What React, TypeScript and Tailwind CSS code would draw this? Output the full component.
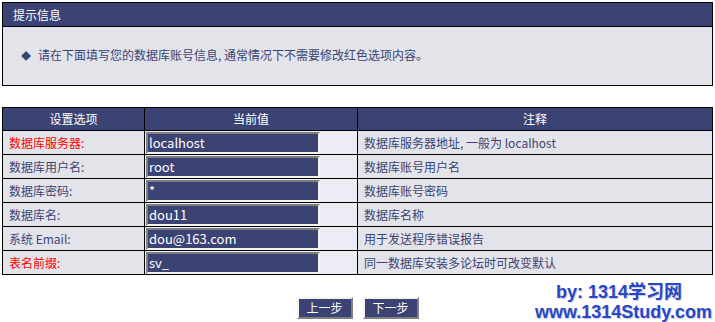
const navy = "bg-[#3b4374]";

const rows: { label: string; value: string; note: string; red?: boolean }[] = [
  { label: "数据库服务器:", value: "localhost", note: "数据库服务器地址, 一般为 localhost", red: true },
  { label: "数据库用户名:", value: "root", note: "数据库账号用户名" },
  { label: "数据库密码:", value: "*", note: "数据库账号密码" },
  { label: "数据库名:", value: "dou11", note: "数据库名称" },
  { label: "系统 Email:", value: "dou@163.com", note: "用于发送程序错误报告" },
  { label: "表名前缀:", value: "sv_", note: "同一数据库安装多论坛时可改变默认", red: true },
];

function Btn({ children }: { children: string }) {
  return (
    <button
      className={`w-[56px] h-[22px] ${navy} text-white text-[12px] leading-none border-2 border-t-[#f4f4ec] border-l-[#f4f4ec] border-b-[#808080] border-r-[#808080]`}
    >
      {children}
    </button>
  );
}

export default function App() {
  return (
    <div
      className="relative w-[715px] h-[322px] bg-white overflow-hidden text-[12px] text-[#3b4374]"
      style={{ fontFamily: '"Noto Sans CJK SC", "Liberation Sans", sans-serif' }}
    >
      <div className="mt-[2px] mx-[2px] border border-black">
        <div className={`h-[23px] ${navy} text-white flex items-center pl-[10px]`}>提示信息</div>
        <div className="h-[59px] border-t border-black bg-[#e3e4e9] flex items-center pl-[18px] pb-[2px]">
          <span className="text-[10px] mr-[7px]">◆</span>
          请在下面填写您的数据库账号信息, 通常情况下不需要修改红色选项内容。
        </div>
      </div>

      <table className="mt-[21px] mx-[2px] w-[711px] table-fixed border-collapse">
        <colgroup>
          <col className="w-[142px]" />
          <col className="w-[213px]" />
          <col />
        </colgroup>
        <thead>
          <tr className={`h-[23px] ${navy} text-white`}>
            <th className="border border-black font-normal">设置选项</th>
            <th className="border border-black font-normal">当前值</th>
            <th className="border border-black font-normal">注释</th>
          </tr>
        </thead>
        <tbody>
          {rows.map((r) => (
            <tr key={r.label} className="h-[24px]">
              <td className={`border border-black bg-[#e3e4e9] pl-[6px] ${r.red ? "text-[#ff0000]" : ""}`}>
                {r.label}
              </td>
              <td className="border border-black bg-[#ececf5] pl-[1px] py-0">
                <div
                  className={`w-[174px] h-[22px] ${navy} text-white text-[13px] flex items-center pl-[1px] border-2 border-t-[#808080] border-l-[#808080] border-b-[#f4f4ec] border-r-[#f4f4ec]`}
                >
                  {r.value}
                </div>
              </td>
              <td className="border border-black bg-[#e3e4e9] pl-[6px]">{r.note}</td>
            </tr>
          ))}
        </tbody>
      </table>

      <div className="flex justify-center gap-[10px] mt-[22px]">
        <Btn>上一步</Btn>
        <Btn>下一步</Btn>
      </div>

      <div
        className="absolute right-[3px] bottom-0 text-[#2747c9] font-bold text-[18px] leading-[20px] text-right"
        style={{ fontFamily: '"Liberation Sans", "Noto Sans CJK SC", sans-serif', textShadow: "1px 1px 1px #c8c8d8" }}
      >
        <div className="pr-[30px]">by: 1314学习网</div>
        <div>www.1314Study.com</div>
      </div>
    </div>
  );
}
